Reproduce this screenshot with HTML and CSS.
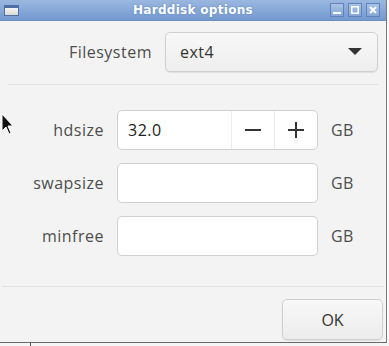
FILE: index.html
```html
<!DOCTYPE html>
<html>
<head>
<meta charset="utf-8">
<link rel="stylesheet" href="styles.css">
</head>
<body>
<div class="window">
  <div class="titlebar">
    <span class="appicon"></span>
    <span class="title">Harddisk options</span>
    <div class="wbtns">
      <span class="wbtn"><svg width="8" height="8" viewBox="0 0 8 8"><rect x="0" y="6" width="8" height="2" fill="#fff"/></svg></span>
      <span class="wbtn"><svg width="8" height="8" viewBox="0 0 8 8"><rect x="0.75" y="0.75" width="6.5" height="6.5" fill="none" stroke="#fff" stroke-width="1.5"/></svg></span>
      <span class="wbtn"><svg width="8" height="8" viewBox="0 0 8 8"><path d="M1 1L7 7M7 1L1 7" stroke="#fff" stroke-width="2"/></svg></span>
    </div>
  </div>
  <div class="content">
    <div class="fsrow">
      <label class="lbl">Filesystem</label>
      <div class="combo"><span>ext4</span><svg width="14" height="8" viewBox="0 0 14 8"><path d="M0 0H14L7 7Z" fill="#333"/></svg></div>
    </div>
    <div class="sep sep1"></div>
    <div class="grid">
      <label class="lbl">hdsize</label>
      <div class="entry spin">
        <span class="val">32.0</span>
        <span class="sbtn"><svg width="16" height="16" viewBox="0 0 16 16"><rect x="0" y="7" width="16" height="2" fill="#333"/></svg></span>
        <span class="sbtn"><svg width="16" height="16" viewBox="0 0 16 16"><rect x="0" y="7" width="16" height="2" fill="#333"/><rect x="7" y="0" width="2" height="16" fill="#333"/></svg></span>
      </div>
      <span class="unit">GB</span>
      <label class="lbl">swapsize</label>
      <div class="entry"></div>
      <span class="unit">GB</span>
      <label class="lbl">minfree</label>
      <div class="entry"></div>
      <span class="unit">GB</span>
    </div>
    <div class="sep sep2"></div>
    <div class="actions"><button class="ok">OK</button></div>
  </div>
  <svg class="cursor" width="14" height="22" viewBox="0 0 14 22"><path d="M1 1V18L5 14L8 21L10 20L7 13H12Z" fill="#111" stroke="#fff" stroke-width="1"/></svg>
</div>
<div class="below"><span class="vline"></span></div>
</body>
</html>
```
FILE: styles.css
```css
html, body { margin: 0; padding: 0; }
body {
  width: 389px; height: 346px; overflow: hidden;
  background: #fbfbfb;
  font-family: "Open Sans", "Noto Sans", sans-serif;
}
.window {
  position: relative;
  width: 386px;
  height: 342px;
  background: #f3f3f3;
  border-right: 1px solid #7a7a7a;
  border-bottom: 1px solid #6a6a6a;
  display: flex; flex-direction: column;
}
.titlebar {
  height: 21px;
  background: linear-gradient(#9ab7e0, #7499cf);
  display: flex; align-items: center;
  position: relative;
  border-bottom: 1px solid #6c8fc2;
  box-sizing: border-box;
}
.appicon {
  margin-left: 4px;
  width: 15px; height: 11px;
  border: 1px solid #4e6fa3;
  border-top-width: 3px;
  background: linear-gradient(#f6f6f2, #d8d8d2);
  box-sizing: border-box;
}
.title {
  position: absolute; left: 0; right: 0; top: 0; line-height: 21px;
  text-align: center;
  color: #fff; font-weight: bold; font-size: 12px;
  font-family: "DejaVu Sans", sans-serif;
  text-shadow: 0 0 2px #5a7fb5;
  letter-spacing: 0.3px;
}
.wbtns { margin-left: auto; display: flex; gap: 4px; margin-right: 6px; position: relative; }
.wbtn {
  width: 14px; height: 14px; box-sizing: border-box;
  border: 1px solid #5f84bb;
  background: linear-gradient(#a9c2e6, #85a6d6);
  display: flex; align-items: center; justify-content: center;
}
.content { flex: 1; display: flex; flex-direction: column; }
.lbl { color: #4d4d4d; font-size: 16px; letter-spacing: 0.5px; text-align: right; }
.fsrow {
  margin-top: 11px;
  display: grid; grid-template-columns: 152px 213px; column-gap: 13px;
  align-items: center;
}
.combo {
  height: 40px; box-sizing: border-box;
  border: 1px solid #cfcfcf; border-radius: 5px;
  background: linear-gradient(#f8f8f8, #eeeeee);
  box-shadow: 0 1px 1px rgba(0,0,0,0.08);
  display: flex; align-items: center; justify-content: space-between;
  padding: 0 15px 0 14px;
  font-size: 16px; letter-spacing: 0.5px; color: #333;
}
.sep { height: 1px; background: #e1e1e1; }
.sep1 { margin: 12px 8px 0 8px; }
.sep2 { margin: 30px 2px 0 2px; }
.grid {
  margin-top: 25px;
  display: grid;
  grid-template-columns: 104px 201px auto;
  column-gap: 13px; row-gap: 13px;
  align-items: center;
}
.entry {
  height: 40px; box-sizing: border-box;
  border: 1px solid #d0d0d0; border-radius: 5px;
  background: #fff;
}
.spin { display: flex; align-items: stretch; }
.val { flex: 1; display: flex; align-items: center; padding-left: 10px; font-size: 16px; letter-spacing: 0.5px; color: #222; }
.sbtn {
  width: 42px; border-left: 1px solid #ececec;
  display: flex; align-items: center; justify-content: center;
}
.unit { color: #4d4d4d; font-size: 16px; letter-spacing: 0.3px; }
.actions { margin-top: 12px; display: flex; justify-content: flex-end; padding-right: 3px; }
.ok {
  width: 101px; height: 41px;
  border: 1px solid #cfcfcf; border-radius: 5px;
  background: linear-gradient(#f8f8f8, #ececec);
  box-shadow: 0 1px 1px rgba(0,0,0,0.08);
  font-family: "Open Sans", "Noto Sans", sans-serif;
  font-size: 16px; color: #333;
}
.cursor { position: absolute; left: 1px; top: 113px; }
.below { height: 3px; position: relative; background: #f5f5f5; }
.vline { position: absolute; left: 30px; top: 0; width: 1px; height: 3px; background: #555; }
```
